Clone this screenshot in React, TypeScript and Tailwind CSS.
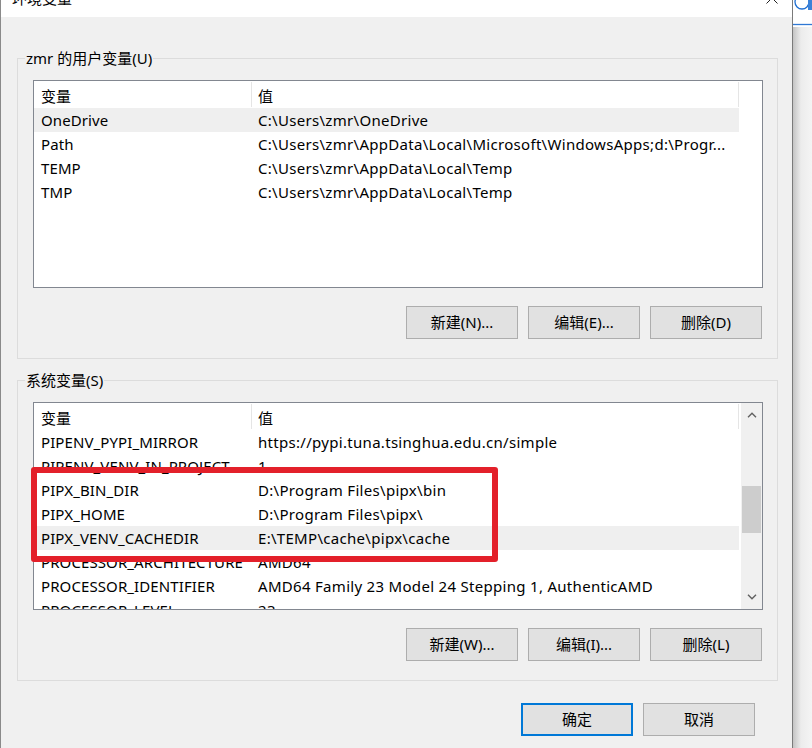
import React from "react";

type EnvVar = { name: string; value: string; selected?: boolean };

const userVars: EnvVar[] = [
  { name: "OneDrive", value: "C:\\Users\\zmr\\OneDrive", selected: true },
  { name: "Path", value: "C:\\Users\\zmr\\AppData\\Local\\Microsoft\\WindowsApps;d:\\Progr..." },
  { name: "TEMP", value: "C:\\Users\\zmr\\AppData\\Local\\Temp" },
  { name: "TMP", value: "C:\\Users\\zmr\\AppData\\Local\\Temp" },
];

const systemVars: EnvVar[] = [
  { name: "PIPENV_PYPI_MIRROR", value: "https://pypi.tuna.tsinghua.edu.cn/simple" },
  { name: "PIPENV_VENV_IN_PROJECT", value: "1" },
  { name: "PIPX_BIN_DIR", value: "D:\\Program Files\\pipx\\bin" },
  { name: "PIPX_HOME", value: "D:\\Program Files\\pipx\\" },
  { name: "PIPX_VENV_CACHEDIR", value: "E:\\TEMP\\cache\\pipx\\cache", selected: true },
  { name: "PROCESSOR_ARCHITECTURE", value: "AMD64" },
  { name: "PROCESSOR_IDENTIFIER", value: "AMD64 Family 23 Model 24 Stepping 1, AuthenticAMD" },
  { name: "PROCESSOR_LEVEL", value: "23" },
];

const Chevron: React.FC<{ up?: boolean }> = ({ up }) => (
  <svg width="10" height="6" viewBox="0 0 10 6" fill="none">
    <path d={up ? "M1 5.3L5 1.3L9 5.3" : "M1 0.7L5 4.7L9 0.7"} stroke="#606060" strokeWidth="1.4" />
  </svg>
);

const ScrollBar = () => (
  <div className="ml-auto flex h-full w-[21px] shrink-0 flex-col bg-[#f0f0f0]">
    <div className="flex h-[24px] items-center justify-center">
      <Chevron up />
    </div>
    <div className="flex-1">
      <div className="mx-auto mt-[59px] h-[47px] w-[19px] bg-[#cdcdcd]" />
    </div>
    <div className="flex h-[24px] items-center justify-center">
      <Chevron />
    </div>
  </div>
);

const VarList: React.FC<{ rows: EnvVar[]; scroll?: boolean; children?: React.ReactNode }> = ({
  rows,
  scroll,
  children,
}) => (
  <div className="relative ml-[15px] mt-[12px] h-[208px] w-[730px]">
    <div className="flex h-full w-full overflow-hidden border border-[#828790] bg-white">
      <div className="w-[705px] shrink-0">
        <div className="flex h-[27px]">
          <div className="my-[1px] w-[218px] shrink-0 border-r border-[#e5e5e5] pl-[7px] pt-[2px] leading-[24px]">
            变量
          </div>
          <div className="my-[1px] w-[487px] shrink-0 border-r border-[#e5e5e5] pl-[6px] pt-[2px] leading-[24px]">
            值
          </div>
        </div>
        {rows.map((r) => (
          <div key={r.name} className={`flex h-[24px] leading-[24px] ${r.selected ? "bg-[#efefef]" : ""}`}>
            <div className="w-[218px] shrink-0 overflow-hidden whitespace-nowrap pl-[7px] tracking-[0.1px]">
              {r.name}
            </div>
            <div className="min-w-0 flex-1 overflow-hidden whitespace-nowrap pl-[6px] tracking-[0.3px]">
              {r.value}
            </div>
          </div>
        ))}
      </div>
      {scroll && <ScrollBar />}
    </div>
    {children}
  </div>
);

const Button: React.FC<{ label: string; isDefault?: boolean }> = ({ label, isDefault }) => (
  <button
    className={`h-[33px] w-[112px] bg-[#e1e1e1] text-[15px] text-black ${
      isDefault ? "border-2 border-[#0078d7]" : "border border-[#adadad]"
    }`}
  >
    {label}
  </button>
);

const GroupBox: React.FC<{ title: string; className?: string; children: React.ReactNode }> = ({
  title,
  className,
  children,
}) => (
  <div className={`ml-[16px] h-[301px] w-[761px] border border-[#dcdcdc] ${className ?? ""}`}>
    <div className="-mt-[11px] ml-[7px] w-fit bg-[#f0f0f0] px-[1px] leading-[20px]">{title}</div>
    {children}
  </div>
);

export default function App() {
  return (
    <div className="flex h-[748px] w-[812px] overflow-hidden bg-[#f4f4f4] font-['Noto_Sans','Noto_Sans_CJK_SC',sans-serif] text-[15px] text-black">
      {/* dialog window */}
      <div className="flex h-full w-[793px] shrink-0 flex-col border-x border-l-[#8a8a8a] border-r-[#7a7a7a]">
        <div className="flex h-[17px] shrink-0 items-start justify-between overflow-hidden bg-white">
          <div className="-mt-[12px] pl-[11px] leading-[20px]">环境变量</div>
          <svg className="-mt-[8px] mr-[14px]" width="12" height="12" viewBox="0 0 12 12">
            <path d="M0.5 0.5L11.5 11.5M11.5 0.5L0.5 11.5" stroke="#222" strokeWidth="1" />
          </svg>
        </div>

        <div className="flex-1 bg-[#f0f0f0]">
          <GroupBox title="zmr 的用户变量(U)" className="mt-[41px]">
            <VarList rows={userVars} />
            <div className="mt-[18px] flex justify-end gap-[10px] pr-[15px]">
              <Button label="新建(N)..." />
              <Button label="编辑(E)..." />
              <Button label="删除(D)" />
            </div>
          </GroupBox>

          <GroupBox title="系统变量(S)" className="mt-[21px]">
            <VarList rows={systemVars} scroll>
              {/* red highlight frame around the pipx entries */}
              <div className="pointer-events-none absolute left-[-2px] top-[65px] h-[95px] w-[467px] rounded-[3px] border-[6px] border-[#e3202a]" />
            </VarList>
            <div className="mt-[18px] flex justify-end gap-[10px] pr-[15px]">
              <Button label="新建(W)..." />
              <Button label="编辑(I)..." />
              <Button label="删除(L)" />
            </div>
          </GroupBox>

          <div className="mt-[22px] flex justify-end gap-[10px] pr-[37px]">
            <Button label="确定" isDefault />
            <Button label="取消" />
          </div>
        </div>
      </div>

      {/* window behind, with shadow */}
      <div className="flex w-[19px] shrink-0 flex-col">
        <div className="h-[27px] bg-white">
          <svg width="19" height="27" viewBox="0 0 19 27" fill="none">
            <circle cx="9" cy="2" r="7" stroke="#1f6fd1" strokeWidth="1.3" />
            <rect x="15" y="0" width="4" height="10" fill="#3b82d8" />
            <path d="M0 24.5H19" stroke="#2f78d4" strokeWidth="1.3" />
          </svg>
        </div>
        <div className="flex-1 bg-[linear-gradient(to_right,#c4c4c4,#ececec_8px,#f4f4f4)]" />
      </div>
    </div>
  );
}
